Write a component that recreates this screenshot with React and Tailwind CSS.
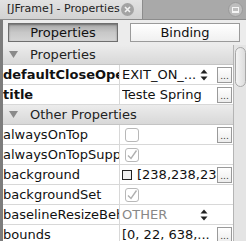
import React from 'react';

const font = { fontFamily: '"DejaVu Sans", "Liberation Sans", sans-serif' };

const Dots = () => (
  <div className="w-[15px] h-[16px] border border-[#9a9a9a] bg-gradient-to-b from-white to-[#ececec] flex items-end justify-center text-[9px] leading-[10px] text-[#333] pb-[1px]">
    ...
  </div>
);

const Stepper = () => (
  <svg width="8" height="12" viewBox="0 0 8 12" className="mr-[9px] shrink-0">
    <path d="M4 0.5 L7.5 4.5 L0.5 4.5 Z" fill="#222" />
    <path d="M4 11.5 L7.5 7.5 L0.5 7.5 Z" fill="#222" />
  </svg>
);

const Check = ({ checked }) => (
  <div className="w-[14px] h-[14px] rounded-[3px] border border-[#b8b8b8] bg-white flex items-center justify-center">
    {checked && (
      <svg width="12" height="12" viewBox="0 0 12 12">
        <path d="M2 6.5 L5 9.5 L10.5 1.5" fill="none" stroke="#b0b0b0" strokeWidth="1.4" />
      </svg>
    )}
  </div>
);

const Group = ({ label }) => (
  <div className="h-[20px] flex items-center bg-gradient-to-b from-[#ececec] to-[#d8d8d8] border-b border-[#c4c4c4]">
    <svg width="9" height="7" viewBox="0 0 9 7" className="ml-[6px] mr-[12px]">
      <path d="M0 0 L9 0 L4.5 7 Z" fill="#8a8a8a" />
    </svg>
    <span className="text-[13px] text-[#222]">{label}</span>
  </div>
);

const Row = ({ name, bold, children, button }) => (
  <div className="h-[20px] flex border-b border-[#d8d8d8] bg-white">
    <div className={`w-[117px] shrink-0 overflow-hidden whitespace-nowrap text-[13px] leading-[19px] text-[#111] border-r border-[#d8d8d8] ${bold ? 'font-bold' : ''}`}>
      {name}
    </div>
    <div className="flex-1 flex items-center min-w-0 pl-[2px]">
      <div className="flex-1 flex items-center min-w-0 overflow-hidden whitespace-nowrap text-[13px] text-[#111]">
        {children}
      </div>
      <div className="w-[15px] shrink-0 mr-[1px]">{button && <Dots />}</div>
    </div>
  </div>
);

export default function App() {
  return (
    <div className="w-[246px] h-[241px] overflow-hidden bg-[#e8e8e8] flex flex-col" style={font}>
      {/* tab bar */}
      <div className="h-[20px] flex shrink-0 bg-[#a9a9a9] border-b border-[#8c8c8c]">
        <div className="w-[143px] flex items-center bg-gradient-to-b from-[#e2e2e2] to-[#d2d2d2] border-r border-[#8c8c8c]">
          <span className="ml-[7px] text-[11px] text-[#222] whitespace-nowrap">[JFrame] - Properties</span>
          <div className="ml-auto mr-[8px] w-[13px] h-[13px] rounded-full bg-[#a3a3a3] flex items-center justify-center">
            <svg width="7" height="7" viewBox="0 0 7 7">
              <path d="M1 1 L6 6 M6 1 L1 6" stroke="#f2f2f2" strokeWidth="1.6" />
            </svg>
          </div>
        </div>
        <div className="flex-1 flex items-center justify-end pr-[3px]">
          <div className="w-[15px] h-[15px] rounded-full bg-[#bdbdbd] border border-[#9a9a9a] flex items-center justify-center">
            <div className="w-[7px] h-[6px] border border-[#f4f4f4] border-b-2" />
          </div>
        </div>
      </div>

      <div className="flex-1 flex border-l-[3px] border-[#7c7c7c] min-h-0">
        <div className="flex-1 flex flex-col min-w-0">
          {/* toolbar */}
          <div className="h-[25px] shrink-0 flex items-center gap-[12px] pl-[5px] pr-[3px] bg-[#ececec]">
            <div className="w-[110px] h-[19px] border border-[#6e6e6e] bg-gradient-to-b from-[#a8a8a8] via-[#c8c8c8] to-[#d4d4d4] flex items-center justify-center text-[13px] text-[#111] shadow-[inset_0_1px_2px_rgba(0,0,0,0.35)]">
              Properties
            </div>
            <div className="w-[110px] h-[19px] border border-[#9a9a9a] bg-gradient-to-b from-white to-[#f0f0f0] flex items-center justify-center text-[13px] text-[#111]">
              Binding
            </div>
          </div>

          <div className="flex-1 flex min-h-0">
            <div className="flex-1 flex flex-col min-w-0 border-r border-[#b4b4b4]">
              <Group label="Properties" />
              <Row name="defaultCloseOperation" bold button>
                <span className="flex-1 overflow-hidden">EXIT_ON_...</span>
                <Stepper />
              </Row>
              <Row name="title" bold button>
                <span>Teste Spring</span>
              </Row>
              <Group label="Other Properties" />
              <Row name="alwaysOnTop" button>
                <span className="ml-[3px]"><Check /></span>
              </Row>
              <Row name="alwaysOnTopSupported">
                <span className="ml-[3px]"><Check checked /></span>
              </Row>
              <Row name="background" button>
                <div className="w-[10px] h-[10px] border border-[#222] bg-[#eeeeee] mr-[5px] shrink-0" />
                <span>[238,238,238]</span>
              </Row>
              <Row name="backgroundSet">
                <span className="ml-[3px]"><Check checked /></span>
              </Row>
              <Row name="baselineResizeBehavior">
                <span className="flex-1 text-[#888]">OTHER</span>
                <Stepper />
              </Row>
              <Row name="bounds" button>
                <span>[0, 22, 638,...</span>
              </Row>
            </div>
            {/* scrollbar */}
            <div className="w-[12px] shrink-0 bg-[#e4e4e4] pt-[2px] pl-[1px]">
              <div className="h-[40px] rounded-[6px] border border-[#a8a8a8] bg-gradient-to-r from-[#f4f4f4] to-[#dcdcdc]" />
            </div>
          </div>
        </div>
      </div>
    </div>
  );
}
